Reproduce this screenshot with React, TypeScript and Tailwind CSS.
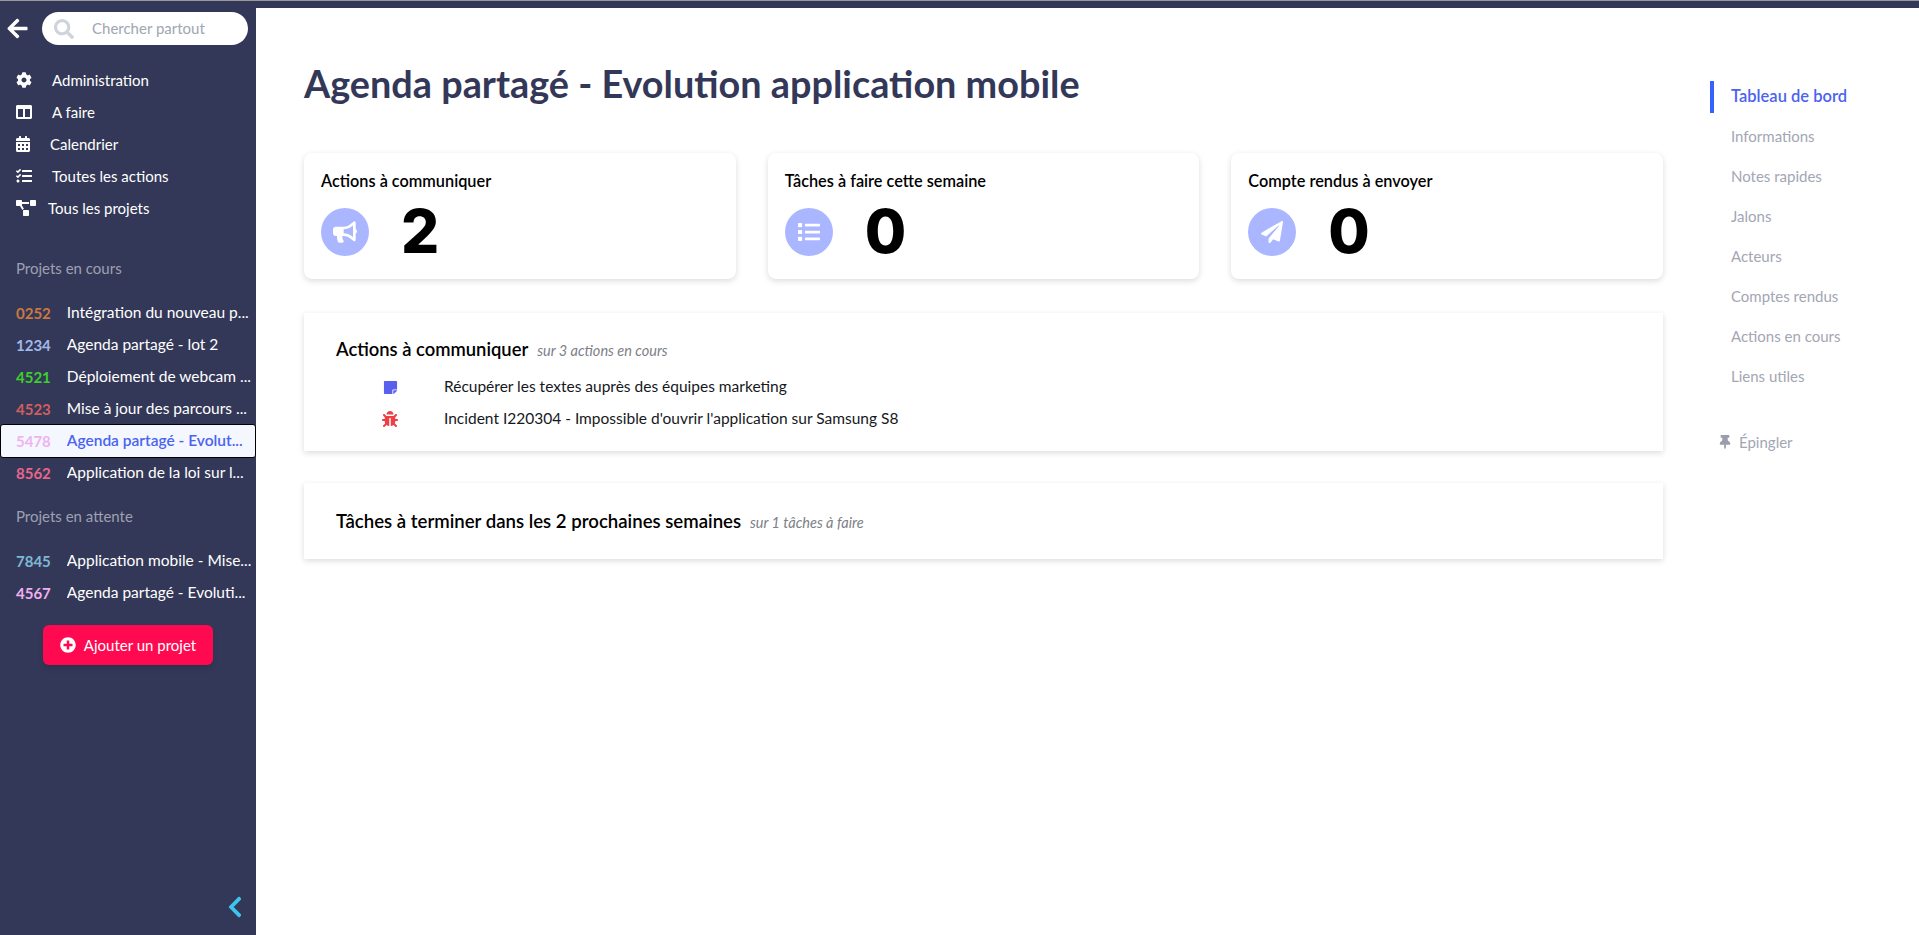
import { IconType } from "react-icons";
import {
  FaArrowLeft,
  FaBug,
  FaBullhorn,
  FaCalendarAlt,
  FaChevronLeft,
  FaCog,
  FaColumns,
  FaList,
  FaPaperPlane,
  FaPlusCircle,
  FaProjectDiagram,
  FaSearch,
  FaStickyNote,
  FaTasks,
  FaThumbtack,
} from "react-icons/fa";

const NAV: { icon: IconType; label: string; size: string; gap: string }[] = [
  { icon: FaCog, label: "Administration", size: "w-4 h-4", gap: "ml-5" },
  { icon: FaColumns, label: "A faire", size: "w-4 h-4", gap: "ml-5" },
  { icon: FaCalendarAlt, label: "Calendrier", size: "w-3.5 h-4", gap: "ml-5" },
  { icon: FaTasks, label: "Toutes les actions", size: "w-4 h-4", gap: "ml-5" },
  { icon: FaProjectDiagram, label: "Tous les projets", size: "w-5 h-4", gap: "ml-3" },
];

const CURRENT = [
  { code: "0252", color: "text-[#c9793f]", name: "Intégration du nouveau p..." },
  { code: "1234", color: "text-[#a3b8e8]", name: "Agenda partagé - lot 2" },
  { code: "4521", color: "text-[#3ecf2b]", name: "Déploiement de webcam ..." },
  { code: "4523", color: "text-[#d05f5f]", name: "Mise à jour des parcours ..." },
  { code: "5478", color: "text-[#eeb4ee]", name: "Agenda partagé - Evolut...", active: true },
  { code: "8562", color: "text-[#e8668a]", name: "Application de la loi sur l..." },
];

const WAITING = [
  { code: "7845", color: "text-[#7fb8d4]", name: "Application mobile - Mise..." },
  { code: "4567", color: "text-[#f0b0ee]", name: "Agenda partagé - Evoluti..." },
];

const CARDS: { title: string; value: string; icon: IconType }[] = [
  { title: "Actions à communiquer", value: "2", icon: FaBullhorn },
  { title: "Tâches à faire cette semaine", value: "0", icon: FaList },
  { title: "Compte rendus à envoyer", value: "0", icon: FaPaperPlane },
];

const ANCHORS = ["Informations", "Notes rapides", "Jalons", "Acteurs", "Comptes rendus", "Actions en cours", "Liens utiles"];

function ProjectRow({ code, color, name, active }: { code: string; color: string; name: string; active?: boolean }) {
  return (
    <div
      className={`h-8 flex items-center pl-4 whitespace-nowrap text-[15.5px] ${
        active ? "bg-[#f5f7ff] border border-black rounded-[3px] pl-[15px] h-[34px] -my-px relative" : ""
      }`}
    >
      <span className={`font-bold text-[15px] ${color}`}>{code}</span>
      <span className={`ml-[16px] truncate ${active ? "text-[#4a63f0] font-semibold" : "text-white"}`}>{name}</span>
    </div>
  );
}

export default function App() {
  return (
    <div className="h-[935px] w-full flex flex-col overflow-hidden bg-white font-['Lato',sans-serif]">
      <div className="h-2 bg-[#343858] border-t border-[#9a9a9a] shrink-0" />
      <div className="flex flex-1 min-h-0">
        {/* Sidebar */}
        <aside className="w-[256px] shrink-0 bg-[#343858] flex flex-col relative">
          <div className="flex items-center pl-1.5 pr-2 pt-1 h-[37px]">
            <FaArrowLeft className="w-[23px] h-[23px] text-white" />
            <div className="ml-[13px] w-[206px] h-[33px] bg-white rounded-full flex items-center pl-3">
              <FaSearch className="w-5 h-5 text-[#ced4da]" />
              <span className="ml-[18px] text-[15px] text-[#a0a6b2]">Chercher partout</span>
            </div>
          </div>

          <nav className="mt-[19px]">
            {NAV.map((n) => (
              <div key={n.label} className="h-8 flex items-center pl-4 text-white text-[15px]">
                <n.icon className={n.size} />
                <span className={n.gap}>{n.label}</span>
              </div>
            ))}
          </nav>

          <div className="mt-[24px] h-10 pl-4 flex items-center text-[15px] text-[#9da1b0]">Projets en cours</div>
          <div className="mt-[9px]">
            {CURRENT.map((p) => (
              <ProjectRow key={p.code} {...p} />
            ))}
          </div>

          <div className="mt-[7px] h-10 pl-4 flex items-center text-[15px] text-[#9da1b0]">Projets en attente</div>
          <div className="mt-[9px]">
            {WAITING.map((p) => (
              <ProjectRow key={p.code} {...p} />
            ))}
          </div>

          <button className="mt-[16px] ml-[43px] w-[170px] h-10 rounded-md bg-[#ff0a50] text-white text-[15px] flex items-center justify-center shadow-md">
            <FaPlusCircle className="w-4 h-4 mr-2" />
            Ajouter un projet
          </button>

          <FaChevronLeft className="absolute left-[223px] bottom-[16px] h-6 w-auto text-[#3cc4ee]" />
        </aside>

        {/* Main */}
        <main className="flex-1 min-w-0 pl-[48px] pt-[46px]">
          <h1 className="text-[37.8px] leading-[60px] font-bold text-[#343858] h-[60px]">Agenda partagé - Evolution application mobile</h1>

          <div className="mt-[39px] w-[1359px] grid grid-cols-3 gap-8">
            {CARDS.map((c) => (
              <div key={c.title} className="h-[126px] rounded-lg bg-white shadow-[0_2px_6px_rgba(0,0,0,0.14)] pl-[17px] pt-[18px]">
                <div className="text-[16.3px] leading-5 font-semibold text-black">{c.title}</div>
                <div className="mt-[17px] flex items-center">
                  <div className="w-12 h-12 rounded-full bg-[#aab6ff] flex items-center justify-center text-white">
                    <c.icon className="w-6 h-[22px]" />
                  </div>
                  <span className="ml-8 text-[60px] leading-[48px] font-extrabold text-black font-['Inter',sans-serif] -translate-y-px">{c.value}</span>
                </div>
              </div>
            ))}
          </div>

          <section className="mt-[34px] w-[1359px] h-[138px] bg-white shadow-[0_2px_6px_rgba(0,0,0,0.14)] pl-[32px] pt-[23px]">
            <div className="flex items-baseline h-[24px]">
              <span className="text-[18.4px] font-semibold text-black">Actions à communiquer</span>
              <span className="ml-[9px] text-[14.5px] italic text-[#7c7f88]">sur 3 actions en cours</span>
            </div>
            <div className="mt-[11px] text-[15.5px] text-[#16181d]">
              <div className="h-8 flex items-center">
                <FaStickyNote className="ml-[47px] w-[15px] h-[15px] text-[#5a60ee]" />
                <span className="ml-[46px]">Récupérer les textes auprès des équipes marketing</span>
              </div>
              <div className="h-8 flex items-center">
                <FaBug className="ml-[46px] w-4 h-4 text-[#ee3f46]" />
                <span className="ml-[46px]">Incident I220304 - Impossible d'ouvrir l'application sur Samsung S8</span>
              </div>
            </div>
          </section>

          <section className="mt-[32px] w-[1359px] h-[76px] bg-white shadow-[0_2px_6px_rgba(0,0,0,0.14)] pl-[32px] pt-[25px]">
            <div className="flex items-baseline h-[24px]">
              <span className="text-[18.6px] font-semibold text-black">Tâches à terminer dans les 2 prochaines semaines</span>
              <span className="ml-[9px] text-[14.5px] italic text-[#7c7f88]">sur 1 tâches à faire</span>
            </div>
          </section>
        </main>

        {/* Anchors */}
        <aside className="w-[209px] shrink-0 pt-[73px] text-[15px] text-[#a3a6b4]">
          <div className="h-8 border-l-4 border-[#3461ff] pl-[17px] pb-0.5 flex items-center text-[16.5px] font-semibold text-[#4a63f0]">Tableau de bord</div>
          {ANCHORS.map((a) => (
            <div key={a} className="h-8 mt-2 pl-[21px] pb-0.5 flex items-center">
              {a}
            </div>
          ))}
          <div className="mt-[33px] ml-[8px] h-8 flex items-center">
            <FaThumbtack className="w-[14px] h-[14px] text-[#9a9dab]" />
            <span className="ml-[7px]">Épingler</span>
          </div>
        </aside>
      </div>
    </div>
  );
}
